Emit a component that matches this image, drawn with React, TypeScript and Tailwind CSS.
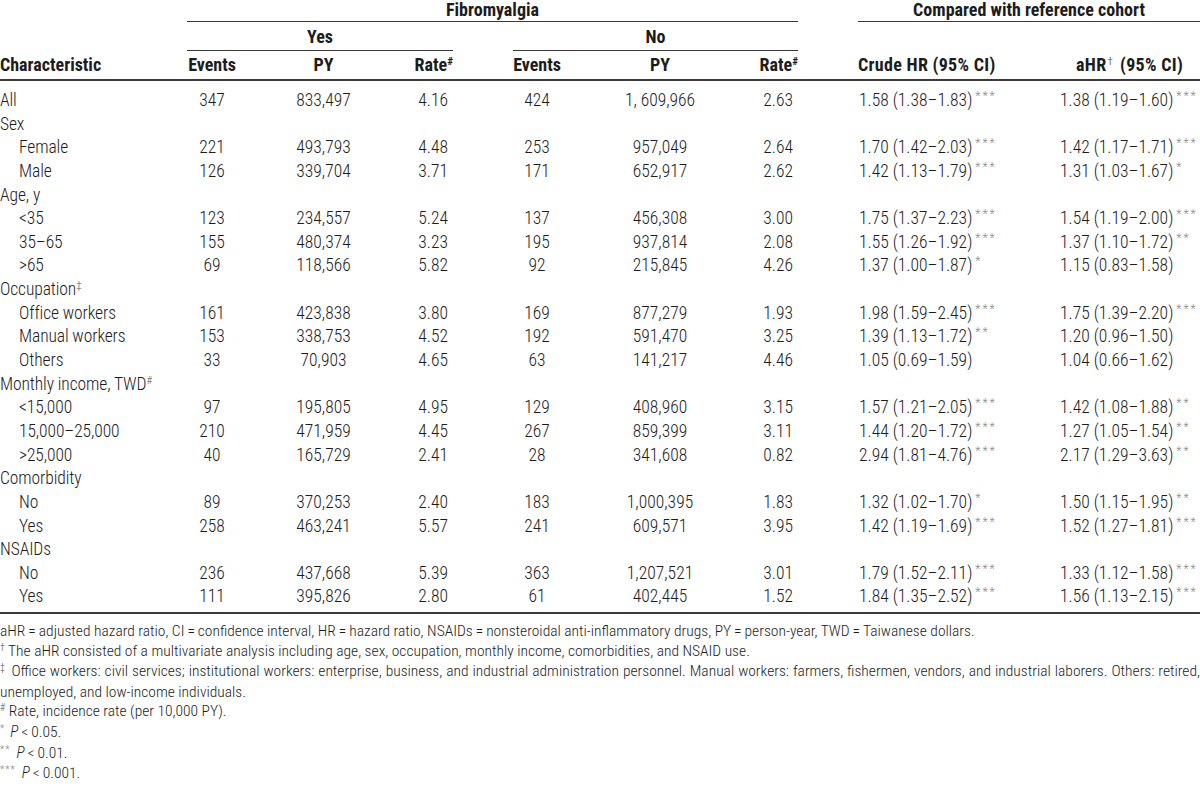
import React from "react";

const COLS =
  "grid grid-cols-[187px_50px_173px_43px_60px_48px_198px_39px_60px_182px_160px]";

type Row = {
  label: string;
  sup?: string;
  indent?: boolean;
  d?: [string, string, string, string, string, string, string, string, string, string];
};

const rows: Row[] = [
  { label: "All", d: ["347", "833,497", "4.16", "424", "1, 609,966", "2.63", "1.58 (1.38–1.83)", "***", "1.38 (1.19–1.60)", "***"] },
  { label: "Sex" },
  { label: "Female", indent: true, d: ["221", "493,793", "4.48", "253", "957,049", "2.64", "1.70 (1.42–2.03)", "***", "1.42 (1.17–1.71)", "***"] },
  { label: "Male", indent: true, d: ["126", "339,704", "3.71", "171", "652,917", "2.62", "1.42 (1.13–1.79)", "***", "1.31 (1.03–1.67)", "*"] },
  { label: "Age, y" },
  { label: "<35", indent: true, d: ["123", "234,557", "5.24", "137", "456,308", "3.00", "1.75 (1.37–2.23)", "***", "1.54 (1.19–2.00)", "***"] },
  { label: "35–65", indent: true, d: ["155", "480,374", "3.23", "195", "937,814", "2.08", "1.55 (1.26–1.92)", "***", "1.37 (1.10–1.72)", "**"] },
  { label: ">65", indent: true, d: ["69", "118,566", "5.82", "92", "215,845", "4.26", "1.37 (1.00–1.87)", "*", "1.15 (0.83–1.58)", ""] },
  { label: "Occupation", sup: "‡" },
  { label: "Office workers", indent: true, d: ["161", "423,838", "3.80", "169", "877,279", "1.93", "1.98 (1.59–2.45)", "***", "1.75 (1.39–2.20)", "***"] },
  { label: "Manual workers", indent: true, d: ["153", "338,753", "4.52", "192", "591,470", "3.25", "1.39 (1.13–1.72)", "**", "1.20 (0.96–1.50)", ""] },
  { label: "Others", indent: true, d: ["33", "70,903", "4.65", "63", "141,217", "4.46", "1.05 (0.69–1.59)", "", "1.04 (0.66–1.62)", ""] },
  { label: "Monthly income, TWD", sup: "#" },
  { label: "<15,000", indent: true, d: ["97", "195,805", "4.95", "129", "408,960", "3.15", "1.57 (1.21–2.05)", "***", "1.42 (1.08–1.88)", "**"] },
  { label: "15,000–25,000", indent: true, d: ["210", "471,959", "4.45", "267", "859,399", "3.11", "1.44 (1.20–1.72)", "***", "1.27 (1.05–1.54)", "**"] },
  { label: ">25,000", indent: true, d: ["40", "165,729", "2.41", "28", "341,608", "0.82", "2.94 (1.81–4.76)", "***", "2.17 (1.29–3.63)", "**"] },
  { label: "Comorbidity" },
  { label: "No", indent: true, d: ["89", "370,253", "2.40", "183", "1,000,395", "1.83", "1.32 (1.02–1.70)", "*", "1.50 (1.15–1.95)", "**"] },
  { label: "Yes", indent: true, d: ["258", "463,241", "5.57", "241", "609,571", "3.95", "1.42 (1.19–1.69)", "***", "1.52 (1.27–1.81)", "***"] },
  { label: "NSAIDs" },
  { label: "No", indent: true, d: ["236", "437,668", "5.39", "363", "1,207,521", "3.01", "1.79 (1.52–2.11)", "***", "1.33 (1.12–1.58)", "***"] },
  { label: "Yes", indent: true, d: ["111", "395,826", "2.80", "61", "402,445", "1.52", "1.84 (1.35–2.52)", "***", "1.56 (1.13–2.15)", "***"] },
];

function Stars({ s }: { s: string }) {
  if (!s) return null;
  return (
    <span className="relative -top-[6px] ml-[3px] text-[12px] tracking-[2px] text-[#8c8c8c]">
      {s}
    </span>
  );
}

export default function App() {
  return (
    <div className="w-[1200px] h-[789px] overflow-hidden bg-white text-[#1c1c1c] [font-family:'Roboto',sans-serif] [font-stretch:75%]">
      {/* header row 1 */}
      <div className={COLS + " h-[22px] text-[18px] font-bold leading-[20px] whitespace-nowrap"}>
        <div />
        <div className="col-span-7 border-b border-[#3a3a3a] text-center">Fibromyalgia</div>
        <div />
        <div className="col-span-2 border-b border-[#3a3a3a] text-center">
          Compared with reference cohort
        </div>
      </div>
      {/* header row 2 */}
      <div className={COLS + " h-[29px] text-[18px] font-bold leading-[22px] whitespace-nowrap"}>
        <div />
        <div className="col-span-3 border-b border-[#3a3a3a] pt-[4px] text-center">Yes</div>
        <div />
        <div className="col-span-3 border-b border-[#3a3a3a] pt-[4px] text-center">No</div>
        <div className="col-span-3" />
      </div>
      {/* header row 3 */}
      <div className={COLS + " h-[30px] border-b-2 border-[#3a3a3a] text-[18px] font-bold leading-[22px] pt-[3px] whitespace-nowrap"}>
        <div>Characteristic</div>
        <div className="text-center">Events</div>
        <div className="text-center">PY</div>
        <div className="text-right">
          Rate<span className="relative -top-[6px] text-[11px]">#</span>
        </div>
        <div />
        <div className="text-center">Events</div>
        <div className="text-center">PY</div>
        <div className="text-right">
          Rate<span className="relative -top-[6px] text-[11px]">#</span>
        </div>
        <div />
        <div className="tracking-[0.3px]">Crude HR (95% CI)</div>
        <div className="pl-[36px] tracking-[0.3px]">
          aHR<span className="relative -top-[6px] ml-[1px] text-[11px] font-normal text-[#777]">†</span>
          <span className="ml-[7px]">(95% CI)</span>
        </div>
      </div>
      {/* body */}
      <div className="border-b-2 border-[#3a3a3a] pt-[8px] pb-[3px] text-[17.5px] [font-weight:350]">
        {rows.map((r, i) => (
          <div key={i} className={COLS + " h-[23.65px] leading-[23.65px] whitespace-nowrap"}>
            <div className={r.indent ? "pl-[19px] tracking-[-0.1px]" : "tracking-[-0.1px]"}>
              {r.label}
              {r.sup ? (
                <span className="relative -top-[6px] text-[11px] text-[#555]">{r.sup}</span>
              ) : null}
            </div>
            {r.d ? (
              <>
                <div className="text-center">{r.d[0]}</div>
                <div className="text-center">{r.d[1]}</div>
                <div className="text-right pr-[5px]">{r.d[2]}</div>
                <div />
                <div className="text-center">{r.d[3]}</div>
                <div className="text-center">{r.d[4]}</div>
                <div className="text-right pr-[5px]">{r.d[5]}</div>
                <div />
                <div className="pl-[1px]">
                  {r.d[6]}
                  <Stars s={r.d[7]} />
                </div>
                <div className="pl-[20px]">
                  {r.d[8]}
                  <Stars s={r.d[9]} />
                </div>
              </>
            ) : null}
          </div>
        ))}
      </div>
      {/* footnotes */}
      <div className="pt-[8px] text-[15.5px] leading-[19.6px] [font-weight:350]">
        <p className="whitespace-nowrap">
          aHR{"\u2009=\u2009"}adjusted hazard ratio, CI{"\u2009=\u2009"}confidence interval, HR{"\u2009=\u2009"}hazard
          ratio, NSAIDs{"\u2009=\u2009"}nonsteroidal anti-inflammatory drugs, PY{"\u2009=\u2009"}person-year,
          TWD{"\u2009=\u2009"}Taiwanese dollars.
        </p>
        <p className="whitespace-nowrap">
          <span className="relative -top-[5px] text-[10px] text-[#555]">†</span> The aHR consisted of a multivariate
          analysis including age, sex, occupation, monthly income, comorbidities, and NSAID use.
        </p>
        <p className="text-justify [text-align-last:justify] [word-spacing:-2px]">
          <span className="relative -top-[5px] text-[10px] text-[#555]">‡</span> Office workers: civil services;
          institutional workers: enterprise, business, and industrial administration personnel. Manual workers:
          farmers, fishermen, vendors, and industrial laborers. Others: retired,
        </p>
        <p>unemployed, and low-income individuals.</p>
        <p>
          <span className="relative -top-[5px] text-[10px] text-[#555]">#</span> Rate, incidence rate (per 10,000 PY).
        </p>
        <p>
          <span className="relative -top-[5px] text-[10px] text-[#8c8c8c]">*</span>
          <span className="ml-[6px] italic">P</span>
          {"\u2009<\u2009"}0.05.
        </p>
        <p>
          <span className="relative -top-[5px] text-[10px] tracking-[1px] text-[#8c8c8c]">**</span>
          <span className="ml-[6px] italic">P</span>
          {"\u2009<\u2009"}0.01.
        </p>
        <p>
          <span className="relative -top-[5px] text-[10px] tracking-[1px] text-[#8c8c8c]">***</span>
          <span className="ml-[6px] italic">P</span>
          {"\u2009<\u2009"}0.001.
        </p>
      </div>
    </div>
  );
}
